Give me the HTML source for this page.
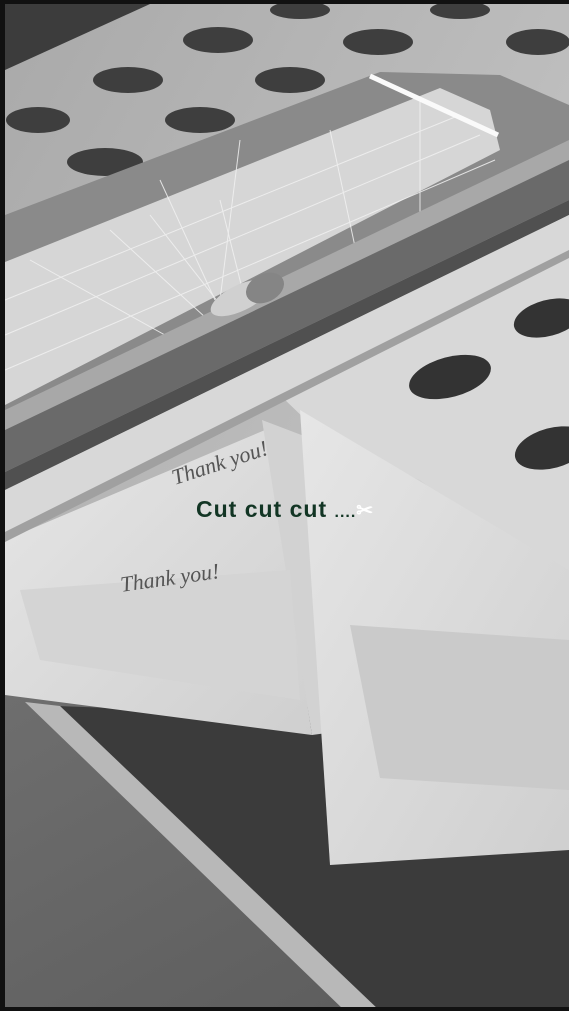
<!DOCTYPE html>
<html><head><meta charset="utf-8"><style>
html,body{margin:0;padding:0;background:#000}
#c{position:relative;width:569px;height:1011px;overflow:hidden}
svg{position:absolute;left:0;top:0}
.t{position:absolute;left:196px;top:496px;font-family:"Comic Sans MS","Liberation Sans",sans-serif;font-weight:bold;font-size:23px;color:#123524;letter-spacing:1px;white-space:nowrap}
.s{position:absolute;font-family:"Liberation Serif",serif;font-style:italic;color:#555;font-size:22px}
</style></head><body><div id="c">
<svg width="569" height="1011" viewBox="0 0 569 1011">
<defs>
<linearGradient id="bg" x1="0" y1="0" x2="1" y2="1"><stop offset="0" stop-color="#a9a9a9"/><stop offset="1" stop-color="#cfcfcf"/></linearGradient>
<linearGradient id="fl" x1="0" y1="0" x2="1" y2="1"><stop offset="0" stop-color="#6e6e6e"/><stop offset="1" stop-color="#5a5a5a"/></linearGradient>
<linearGradient id="card" x1="0" y1="0" x2="1" y2="1"><stop offset="0" stop-color="#e6e6e6"/><stop offset="1" stop-color="#cfcfcf"/></linearGradient>
</defs>
<rect x="0" y="0" width="569" height="1011" fill="url(#bg)"/>
<polygon points="5,4 150,4 5,70" fill="#3c3c3c"/>
<!-- floor -->
<polygon points="5,690 569,720 569,1011 5,1011" fill="url(#fl)"/>
<polygon points="30,705 569,725 569,1011 365,1011" fill="#3b3b3b"/>
<polygon points="25,702 60,706 380,1011 345,1011" fill="#b8b8b8"/>
<!-- stickers top -->
<g fill="#3e3e3e">
<ellipse cx="38" cy="120" rx="32" ry="13"/><ellipse cx="128" cy="80" rx="35" ry="13"/><ellipse cx="218" cy="40" rx="35" ry="13"/>
<ellipse cx="105" cy="162" rx="38" ry="14"/><ellipse cx="200" cy="120" rx="35" ry="13"/><ellipse cx="290" cy="80" rx="35" ry="13"/>
<ellipse cx="378" cy="42" rx="35" ry="13"/><ellipse cx="300" cy="10" rx="30" ry="9"/><ellipse cx="460" cy="10" rx="30" ry="9"/>
<ellipse cx="538" cy="42" rx="32" ry="13"/>
</g>
<!-- right sticker sheet -->
<polygon points="280,395 569,220 569,590 420,530" fill="#d8d8d8"/>
<!-- cards -->
<polygon points="5,540 265,430 312,735 5,695" fill="url(#card)"/>
<polygon points="262,420 420,480 569,600 569,700 312,735" fill="#d2d2d2"/>
<polygon points="300,410 569,570 569,850 330,865" fill="url(#card)"/>
<polygon points="350,625 569,640 569,790 380,778" fill="#cacaca"/>
<polygon points="20,590 290,570 300,700 40,660" fill="#d4d4d4"/>
<g fill="#333"><ellipse cx="450" cy="377" rx="42" ry="20" transform="rotate(-15 450 377)"/><ellipse cx="548" cy="318" rx="35" ry="18" transform="rotate(-15 548 318)"/><ellipse cx="552" cy="448" rx="38" ry="20" transform="rotate(-15 552 448)"/></g>
<!-- cutter board -->
<polygon points="5,215 380,72 500,75 569,105 569,150 5,425" fill="#8a8a8a"/>
<polygon points="5,262 440,88 490,110 500,150 5,405" fill="#d6d6d6"/>
<g stroke="#f2f2f2" stroke-width="1" opacity=".85">
<line x1="5" y1="300" x2="460" y2="115"/><line x1="5" y1="335" x2="480" y2="135"/><line x1="5" y1="370" x2="495" y2="160"/>
<line x1="30" y1="260" x2="210" y2="360"/><line x1="110" y1="230" x2="230" y2="340"/><line x1="150" y1="215" x2="240" y2="330"/>
<line x1="220" y1="200" x2="250" y2="320"/><line x1="240" y1="140" x2="220" y2="300"/><line x1="160" y1="180" x2="215" y2="300"/>
<line x1="330" y1="130" x2="360" y2="270"/><line x1="420" y1="100" x2="420" y2="240"/>
</g>
<line x1="370" y1="76" x2="498" y2="135" stroke="#fafafa" stroke-width="5"/>
<!-- rail -->
<polygon points="5,410 569,140 569,160 5,430" fill="#a8a8a8"/>
<polygon points="5,430 569,160 569,200 5,472" fill="#6a6a6a"/>
<polygon points="5,472 569,200 569,215 5,490" fill="#505050"/>
<polygon points="5,490 569,215 569,250 5,532" fill="#d8d8d8"/>
<polygon points="5,532 569,250 569,258 5,542" fill="#a0a0a0"/>
<ellipse cx="240" cy="298" rx="32" ry="13" fill="#d0d0d0" transform="rotate(-26 240 298)"/>
<ellipse cx="265" cy="288" rx="20" ry="14" fill="#858585" transform="rotate(-26 265 288)"/>
<rect x="0" y="0" width="569" height="4" fill="#111"/>
<rect x="0" y="0" width="5" height="1011" fill="#111"/>
<rect x="0" y="1007" width="569" height="4" fill="#111"/>
</svg>
<div class="s" style="left:170px;top:450px;transform:rotate(-18deg)">Thank you!</div>
<div class="s" style="left:120px;top:565px;transform:rotate(-8deg)">Thank you!</div>
<div class="t">Cut cut cut <span style="font-size:16px">....</span><span style="color:#fff;font-size:20px">✂</span></div>
</div></body></html>
